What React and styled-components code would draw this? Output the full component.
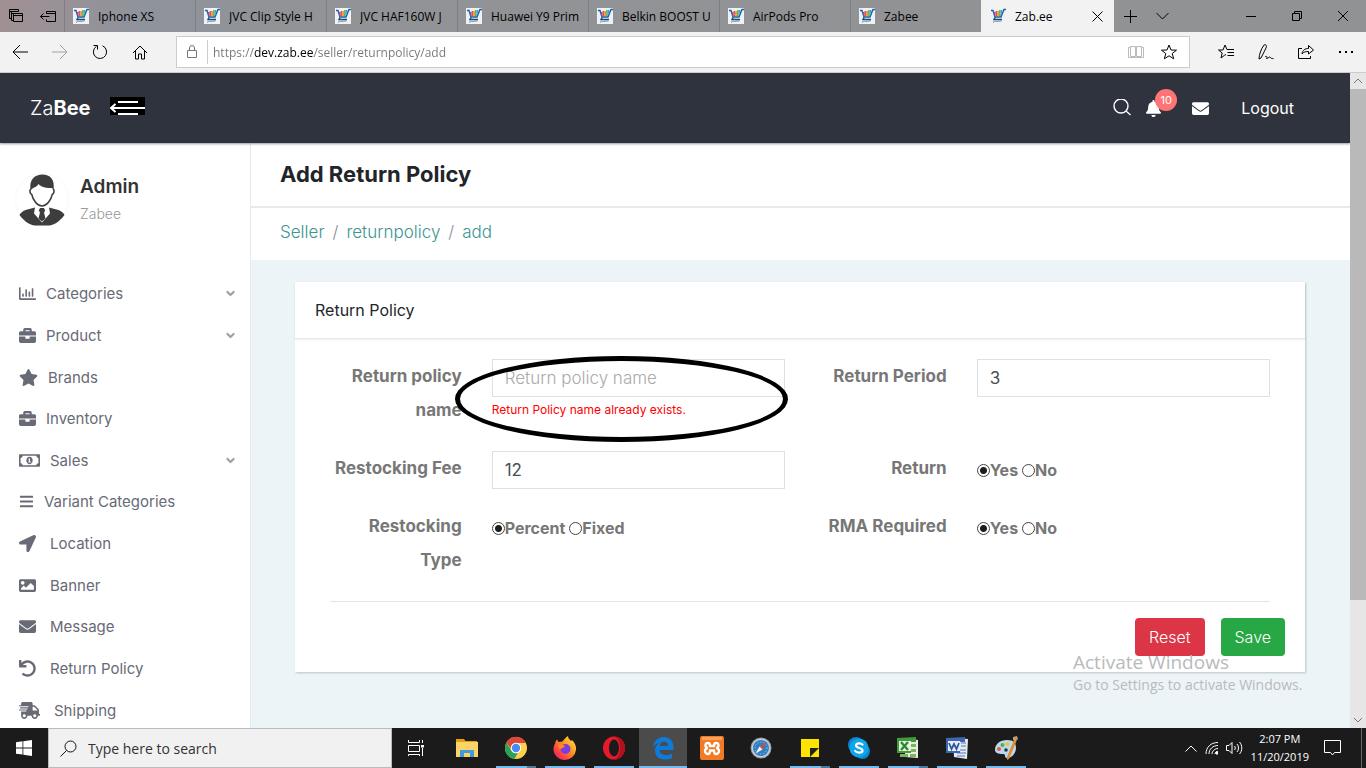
import React, { useState } from 'react'
import styled, { createGlobalStyle } from 'styled-components'
import {
  FaRegChartBar, FaBriefcase, FaStar, FaRegMoneyBillAlt, FaBars, FaLocationArrow,
  FaImage, FaEnvelope, FaUndo, FaShippingFast, FaBell, FaChevronDown
} from 'react-icons/fa'

const tabs = ['Iphone XS', 'JVC Clip Style H', 'JVC HAF160W J', 'Huawei Y9 Prim', 'Belkin BOOST U', 'AirPods Pro', 'Zabee']

const menu = [
  { label: 'Categories', icon: FaRegChartBar, more: true },
  { label: 'Product', icon: FaBriefcase, more: true },
  { label: 'Brands', icon: FaStar, size: 19 },
  { label: 'Inventory', icon: FaBriefcase },
  { label: 'Sales', icon: FaRegMoneyBillAlt, more: true, size: 21 },
  { label: 'Variant Categories', icon: FaBars, size: 15 },
  { label: 'Location', icon: FaLocationArrow, wide: true },
  { label: 'Banner', icon: FaImage, wide: true },
  { label: 'Message', icon: FaEnvelope, wide: true },
  { label: 'Return Policy', icon: FaUndo, wide: true },
  { label: 'Shipping', icon: FaShippingFast, wide: true, size: 21 },
]

const Line = ({ w = 16, h = 16, sw = 1, children }) => (
  <svg width={w} height={h} viewBox={`0 0 ${w} ${h}`} fill="none" stroke="currentColor" strokeWidth={sw}>
    {children}
  </svg>
)

const CartIcon = () => (
  <svg width="16" height="16" viewBox="0 0 16 16">
    <rect width="16" height="16" fill="#eef2f6" />
    <path d="M1 2.500h2l2 6.500h6L14 1.500h2" fill="none" stroke="#1d5f9e" strokeWidth="1.4" />
    <path d="M3.500 4h2v4h-1z" fill="#8c4fb0" />
    <path d="M5.500 3h2v5h-2z" fill="#e2574c" />
    <path d="M7.500 3h1.500v5H7.500z" fill="#f29b30" />
    <path d="M9 2h1.500v6H9z" fill="#6cb845" />
    <path d="M10.500 2h2L11 8h-.5z" fill="#2fa3dc" />
    <path d="M5 9.500l-1 2h8" fill="none" stroke="#23486e" strokeWidth="1.4" />
    <path d="M3 14.500c2-2 2-1 3.500-1s3-.8 5-.6" fill="none" stroke="#6d8ba8" />
  </svg>
)

const Avatar = () => (
  <svg width="54" height="54" viewBox="0 0 54 54">
    <circle cx="27" cy="27" r="26.500" fill="#fff" stroke="#f9f9f9" />
    <path d="M16 16c-2 1-1 5 .8 5.600C18 27 22 33 27 33s9-6 10.200-11.400C39 21 40 17 38 16" fill="#fff" stroke="#3d3d3d" strokeWidth="1.6" />
    <path d="M15.500 17C14 6 20 1.500 27.500 1.500S40 6 38.500 17l-1.500-2c-5 .5-11-1-13.500-4-1 2.500-4 3-6 4.500z" fill="#3d3d3d" />
    <path d="M20 34.500L10.500 37C7.500 38 5.500 40 4.500 42c5 7 12 10.500 15 10.500h15c3 0 10-3.500 15-10.500-1-2-3-4-6-5L34 34.500l1 6-8 9-8-9z" fill="#3d3d3d" />
    <path d="M25 35h4l1.200 2.500-1.200 2 1.500 6-3.500 3-3.500-3 1.500-6-1.200-2z" fill="#3d3d3d" />
  </svg>
)

const Icon24 = ({ children }) => <svg width="24" height="24" viewBox="0 0 24 24">{children}</svg>

const apps = [
  {
    name: 'File Explorer',
    art: <Icon24>
      <path d="M1 3h8l1.500 2H22v3H1z" fill="#e0a010" />
      <path d="M1 6h22v15H1z" fill="#fbd366" />
      <path d="M5 21v-7h14v7h-4v-4H9v4z" fill="#3f9bdc" />
    </Icon24>
  },
  {
    name: 'Chrome', open: true, many: true,
    art: <Icon24>
      <circle cx="12" cy="12" r="11" fill="#fdd24a" />
      <path d="M2.500 6.500A11 11 0 0 1 22 7H12a5 5 0 0 0-4.600 6.500z" fill="#d9483b" />
      <path d="M2.500 6.500l5 8.500A5 5 0 0 0 14 16.600L10.500 23A11 11 0 0 1 2.500 6.500z" fill="#2aa15a" />
      <circle cx="12" cy="12" r="5.200" fill="#fff" />
      <circle cx="12" cy="12" r="4.200" fill="#4a8af4" />
    </Icon24>
  },
  {
    name: 'Firefox', open: true,
    art: <Icon24>
      <defs>
        <linearGradient id="fox" x1="1" y1="0" x2="0" y2="1">
          <stop offset="0" stopColor="#fff04f" /><stop offset=".4" stopColor="#ff9a1f" />
          <stop offset=".75" stopColor="#ff3b47" /><stop offset="1" stopColor="#d6148f" />
        </linearGradient>
      </defs>
      <path d="M2 8c.3-2 1-3.500 2-4.500L5.500 6l4-.5C11.500 3 13 1 15 0c0 2 1.500 3.500 3 5l1-1c3 3 4.500 6 4 10A11.400 11.400 0 0 1 12 24C6 24 .5 19.500.5 13c0-2 .5-4 1.500-5z" fill="url(#fox)" />
      <circle cx="12.500" cy="13" r="5" fill="#7a3ee0" />
      <path d="M5 9c3-1 5-.5 7 1-1 2-3 1.500-4 3-1.500 0-3-1.500-3-4z" fill="#ff8a1c" />
    </Icon24>
  },
  {
    name: 'Opera', open: true,
    art: <Icon24>
      <ellipse cx="12" cy="12" rx="11" ry="11.500" fill="#e8192c" />
      <path d="M12 .5a11 11.500 0 0 1 0 23c4-1 6-6 6-11.500S16 1.500 12 .5z" fill="#b3101f" />
      <ellipse cx="12" cy="12" rx="5" ry="8.500" fill="#1b1b1b" />
    </Icon24>
  },
  {
    name: 'Edge', open: true, active: true,
    art: <Icon24>
      <path d="M2 11C3 4.500 7.500 1 12.800 1 19 1 22.500 5.500 22.500 11v3H8.500c.2 3.500 3 5 6.500 5 2.500 0 4.500-.7 6-1.600v4.500c-2 1-4.200 1.600-7 1.600-6.500 0-10-4-10-9 0-3.800 2-6.500 5-8-3.500.5-5.500 2.500-7 4.500zm6.600-1H17c0-3-1.600-4.600-4-4.600-2.500 0-4 2-4.400 4.600z" fill="#0c7cdc" />
    </Icon24>
  },
  {
    name: 'XAMPP',
    art: <Icon24>
      <rect width="24" height="24" rx="2" fill="#f07a25" />
      <path d="M2 1h20v3H2z" fill="#f9a25c" />
      <path d="M8 7a2.500 2.500 0 1 0 0 5 2.500 2.500 0 1 0 0 6c2 0 2-2 2-3.500h4c0 1.500 0 3.500 2 3.500a2.500 2.500 0 1 0 0-6 2.500 2.500 0 1 0 0-5c-2 0-2 1.500-2 3h-4c0-1.500 0-3-2-3z" fill="none" stroke="#fff" strokeWidth="2.400" />
    </Icon24>
  },
  {
    name: 'Safari',
    art: <Icon24>
      <circle cx="12" cy="12" r="10.500" fill="#8f979e" />
      <circle cx="12" cy="12" r="9.500" fill="#c9ced2" />
      <circle cx="12" cy="12" r="8" fill="#2f7fc4" />
      <circle cx="12" cy="12" r="6" fill="none" stroke="#9fd0f2" strokeDasharray="1 2" />
      <path d="M17.500 6.500L13.500 13.500 10.500 10.500z" fill="#e2443b" />
      <path d="M6.500 17.500L10.500 10.500 13.500 13.500z" fill="#f3f3f3" />
    </Icon24>
  },
  {
    name: 'Sticky Notes', open: true, many: true,
    art: <Icon24>
      <path d="M3 3h18v9h-9v9H3z" fill="#ffe400" />
      <path d="M12 12h9l-9 9z" fill="#222" />
      <path d="M21 12v9h-9z" fill="#ffe400" />
    </Icon24>
  },
  {
    name: 'Skype', open: true,
    art: <Icon24>
      <circle cx="9" cy="9" r="8" fill="#0a84d0" />
      <circle cx="15.500" cy="15.500" r="7.500" fill="#0a84d0" />
      <circle cx="12" cy="12" r="9.500" fill="#10a5ea" />
      <path d="M15.500 8.500C14.500 7 9 6.500 9 9.500s6.500 2 6.500 5-6 2.500-7.300.5" fill="none" stroke="#fff" strokeWidth="2.200" strokeLinecap="round" />
    </Icon24>
  },
  {
    name: 'Excel', open: true, many: true,
    art: <Icon24>
      <path d="M9 2l13 2v18l-13-1z" fill="#e6efe2" />
      <path d="M14 8h6v3h-6zM14 13h6v3h-6zM14 18h6v3h-6zM4 18h8v3H4z" fill="#7fb45f" />
      <path d="M1 2l19-1v5h-5v11H1z" fill="#3f9b3b" />
      <path d="M3 5h12v10H3z" fill="#e9f4e5" />
      <path d="M5 6l7 8M12 6l-7 8" stroke="#2c8a2c" strokeWidth="2.400" />
    </Icon24>
  },
  {
    name: 'Word', open: true,
    art: <Icon24>
      <path d="M8 2l15 1-1 20-13-2z" fill="#e5ebf6" />
      <path d="M16 7h5M16 10h5M14 14h7M12 17h9M12 20h8" stroke="#5779b8" />
      <path d="M1 2l19-1v5h-5v11H1z" fill="#3d66b0" />
      <path d="M3 5h12v10H3z" fill="#e8eefa" />
      <path d="M4 7l2.500 6L9 8l2.500 5L14 7" fill="none" stroke="#2d55a4" strokeWidth="1.800" />
    </Icon24>
  },
  {
    name: 'Paint', open: true,
    art: <Icon24>
      <path d="M1 14C1 8 6 4 13 4s9 3 9 8-4 10-9 10c-3 0-1-4-3.500-4S1 18 1 14z" fill="#b9d9ee" />
      <circle cx="5" cy="13" r="2" fill="#e0584a" />
      <circle cx="8.500" cy="9" r="2" fill="#58ad48" />
      <circle cx="13.500" cy="8" r="2" fill="#f1c232" />
      <circle cx="12" cy="14" r="1.800" fill="#273444" />
      <path d="M20 4l2.500 1L15 23l-2 1v-3z" fill="#e58a2c" />
      <path d="M19 1l4-1 1 3-2.500 2.500L19 4z" fill="#c49a72" />
    </Icon24>
  },
]

function BrowserBar() {
  return (
    <header>
      <TabStrip>
        <TabTools>
          <ToolButton aria-label="Tabs you've set aside"><Line><path d="M3.500 10.500h-2v-9h9v2M1.500 3.500h9M5.500 12.500h-2v-9M3.500 5.500h9" /><path d="M5.500 5.500h9v8h-9zM5.500 7.500h9" /></Line></ToolButton>
          <ToolButton aria-label="Set these tabs aside"><Line><path d="M6.500 5.500v-2h9v10h-9v-2M6.500 5.500h9M.5 8.500h9M3.500 5.500l-3 3 3 3" /></Line></ToolButton>
        </TabTools>
        {tabs.map((name) => (
          <Tab key={name}><CartIcon /><span>{name}</span></Tab>
        ))}
        <Tab $active><CartIcon /><span>Zab.ee</span>
          <Line w={11} h={11}><path d="M.5.5l10 10M10.500.5l-10 10" /></Line>
        </Tab>
        <StripButton aria-label="New tab"><Line w={13} h={13}><path d="M6.500 0v13M0 6.500h13" /></Line></StripButton>
        <StripButton aria-label="Tab previews"><Line w={13} h={8}><path d="M.5 1l6 6 6-6" /></Line></StripButton>
        <WindowButtons>
          <WindowButton aria-label="Minimise"><Line w={10} h={10}><path d="M0 5.500h10" /></Line></WindowButton>
          <WindowButton aria-label="Restore"><Line w={10} h={10}><path d="M.5 2.500h7v7h-7zM2.500 2.500v-2h7v7h-2" /></Line></WindowButton>
          <WindowButton aria-label="Close"><Line w={10} h={10}><path d="M0 0l10 10M10 0L0 10" /></Line></WindowButton>
        </WindowButtons>
      </TabStrip>
      <Toolbar>
        <NavButton aria-label="Back"><Line><path d="M1 8h15M8 1L1 8l7 7" /></Line></NavButton>
        <NavButton aria-label="Forward" disabled><Line><path d="M0 8h15M8 1l7 7-7 7" /></Line></NavButton>
        <NavButton aria-label="Refresh"><Line><path d="M10.500 1.800A6.600 6.600 0 1 1 4.500 2.300M1.500 1.500h4v4" /></Line></NavButton>
        <NavButton aria-label="Home"><Line><path d="M1 9l7-7 7 7M3.500 7v8h3v-5h3v5h3V7" /></Line></NavButton>
        <Address>
          <LockCell><Line w={12} h={14}><path d="M1.500 5.500h9v7h-9zM3.500 5.500V3a2.500 2.500 0 0 1 5 0v2.500" /></Line></LockCell>
          <UrlInput aria-label="Address" defaultValue="https://dev.zab.ee/seller/returnpolicy/add" />
          <AddressButton aria-label="Reading view" disabled><Line><path d="M7.500 2.500h-5v10h5zM8.500 2.500h5v10h-5zM2.500 3.500h-2v10h15v-10h-2" /></Line></AddressButton>
          <AddressButton aria-label="Add to favourites"><Line><path d="M8 1l2 5 5.500.2-4.300 3.400 1.500 5.200L8 11.800l-4.700 3 1.500-5.200L.5 6.200 6 6z" /></Line></AddressButton>
        </Address>
        <NavButton aria-label="Favourites"><Line><path d="M8 10.500l-1.500.8L3 14l1.200-5L.5 6H5l2-5 2 4.500h7M9.500 8.500H16M9.500 11.500H16" /></Line></NavButton>
        <NavButton aria-label="Notes"><Line><path d="M1 15c0-4 2-10 5-14 2-1 3 .5 2 3L3 14l-2 1zM7 13c2-2 2.500 1 1.500 1.500 2 0 3-2.500 4-1s2 1 3 1" /></Line></NavButton>
        <NavButton aria-label="Share"><Line><path d="M4 4.500H.5v10h12V12M4 10c.5-4 3-5.500 6.500-5.500V1.500l5 4.500-5 4V7.500C7.500 7.500 5.500 8 4 10z" /></Line></NavButton>
        <NavButton aria-label="More"><Line sw={2}><path d="M1 8h2M7 8h2M13 8h2" /></Line></NavButton>
      </Toolbar>
    </header>
  )
}

function Sidebar() {
  return (
    <SideNav>
      <Profile>
        <Avatar />
        <div>
          <h2>Admin</h2>
          <p>Zabee</p>
        </div>
      </Profile>
      <MenuList>
        {menu.map(({ label, icon: Icon, more, wide, size = 17 }) => (
          <li key={label}>
            <MenuLink href="#" $wide={wide}>
              <Icon size={size} />
              <span>{label}</span>
              {more && <FaChevronDown className="more" size={9} />}
            </MenuLink>
          </li>
        ))}
      </MenuList>
    </SideNav>
  )
}

function Choice({ name, legend, options }) {
  const [value, setValue] = useState(options[0])

  return (
    <Field role="radiogroup" aria-labelledby={name}>
      <FieldLabel as="span" id={name}>{legend}</FieldLabel>
      <Options>
        {options.map((option) => (
          <label key={option}>
            <Radio name={name} checked={value === option} onChange={() => setValue(option)} />
            {option}
          </label>
        ))}
      </Options>
    </Field>
  )
}

function PolicyForm() {
  return (
    <Card>
      <CardHeader>Return Policy</CardHeader>
      <Form onSubmit={(e) => e.preventDefault()}>
        <Fields>
          <Field>
            <FieldLabel htmlFor="policy">Return policy name</FieldLabel>
            <Control>
              <TextInput id="policy" placeholder="Return policy name" />
              <ErrorText>Return Policy name already exists.</ErrorText>
              <Highlight />
            </Control>
          </Field>
          <Field>
            <FieldLabel htmlFor="period">Return Period</FieldLabel>
            <Control><TextInput id="period" defaultValue="3" /></Control>
          </Field>
          <Field>
            <FieldLabel htmlFor="fee">Restocking Fee</FieldLabel>
            <Control><TextInput id="fee" defaultValue="12" /></Control>
          </Field>
          <Choice name="return" legend="Return" options={['Yes', 'No']} />
          <Choice name="type" legend="Restocking Type" options={['Percent', 'Fixed']} />
          <Choice name="rma" legend="RMA Required" options={['Yes', 'No']} />
        </Fields>
        <Divider />
        <Actions>
          <ActionButton type="reset" $color="#dc3545">Reset</ActionButton>
          <ActionButton type="submit" $color="#28a745">Save</ActionButton>
        </Actions>
      </Form>
    </Card>
  )
}

function Taskbar() {
  return (
    <TaskRow>
      <TaskButton aria-label="Start">
        <svg width="16" height="16" viewBox="0 0 16 16" fill="#fff"><path d="M0 2.200L6.500 1.300v6.200H0zM7.300 1.200L16 0v7.500H7.300zM0 8.400h6.500v6.200L0 13.700zM7.300 8.400H16V16l-8.700-1.200z" /></svg>
      </TaskButton>
      <SearchBox>
        <Line w={17} h={17}><circle cx="10.500" cy="6.500" r="5.500" /><path d="M6.500 10.500L.5 16.500" /></Line>
        <input aria-label="Search" placeholder="Type here to search" />
      </SearchBox>
      <TaskButton aria-label="Task view">
        <Line w={17} h={16}><path d="M.5 0v2.500h11V0M.5 5.500h11v6H.5zM.5 16v-1.500h11V16M14.500 0v3M14.500 8v8" /><path d="M13 5h3v2.500h-3z" fill="#fff" stroke="none" /></Line>
      </TaskButton>
      <AppList>
        {apps.map((app) => (
          <AppButton key={app.name} aria-label={app.name} $open={app.open} $many={app.many} $active={app.active}>{app.art}</AppButton>
        ))}
      </AppList>
      <Tray>
        <Line w={12} h={7}><path d="M.5 6.500L6 1l5.500 5.500" /></Line>
        <Line w={13} h={14}><path d="M1 13C1 6 6 1.500 13 1.500M4 13c0-5 4-8.500 9-8.500M7 13c0-3 3-5.500 6-5.500M10 13c0-1.500 1.500-2.500 3-2.500" /><path d="M11 11h2v2h-2z" fill="#fff" /></Line>
        <Line w={17} h={14}><path d="M.5 4.500H3l3-3v11l-3-3H.5zM8.500 5c1 1 1 3 0 4M11 3c2 2 2 6 0 8M13.500 1c3 3 3 9 0 12" /></Line>
        <Clock><span>2:07 PM</span><span>11/20/2019</span></Clock>
        <Line w={17} h={16}><path d="M.5.5h16v12h-6l-2 2.500-2-2.500h-6z" /></Line>
        <ShowDesktop aria-label="Show desktop" />
      </Tray>
    </TaskRow>
  )
}

function App() {
  return (
    <Screen>
      <GlobalStyle />
      <BrowserBar />
      <Viewport>
        <Site>
          <SiteHeader>
            <Brand href="#">Za<b>Bee</b></Brand>
            <MenuToggle aria-label="Toggle menu">
              <svg width="35" height="18" viewBox="0 0 35 18" fill="none" stroke="#fff" strokeWidth="2">
                <rect width="35" height="18" fill="#000" stroke="none" />
                <path d="M8 5h20M1 11h34M8 17h20M5.500 7L1 11l4.500 4" />
              </svg>
            </MenuToggle>
            <HeaderTools>
              <IconButton aria-label="Search"><Line w={18} h={18} sw={1.4}><circle cx="8" cy="7" r="7" /><path d="M13 12l4.500 4" /></Line></IconButton>
              <IconButton aria-label="Notifications"><FaBell /><Badge>10</Badge></IconButton>
              <IconButton aria-label="Messages" $spaced><FaEnvelope /></IconButton>
              <a href="#">Logout</a>
            </HeaderTools>
          </SiteHeader>
          <SiteBody>
            <Sidebar />
            <Main>
              <PageTitle>Add Return Policy</PageTitle>
              <Breadcrumb>
                <a href="#">Seller</a><span>/</span><a href="#">returnpolicy</a><span>/</span><a href="#">add</a>
              </Breadcrumb>
              <PolicyForm />
            </Main>
          </SiteBody>
        </Site>
        <ScrollBar>
          <Line w={16} h={16}><path d="M4 10l4-4 4 4" /></Line>
          <ScrollTrack><div /></ScrollTrack>
          <Line w={16} h={16}><path d="M4 6l4 4 4-4" /></Line>
        </ScrollBar>
      </Viewport>
      <Watermark>
        <h4>Activate Windows</h4>
        <p>Go to Settings to activate Windows.</p>
      </Watermark>
      <Taskbar />
    </Screen>
  )
}

const GlobalStyle = createGlobalStyle`
  * { box-sizing: border-box; margin: 0; padding: 0; }
  button, input { font: inherit; color: inherit; border: 0; background: none; outline: 0; min-width: 0; }
  button { display: flex; align-items: center; justify-content: center; }
  a { color: inherit; text-decoration: none; }
  ul { list-style: none; }
  svg { flex: none; }
`

const Screen = styled.div`
  display: flex;
  flex-direction: column;
  height: 100vh;
  overflow: hidden;
  font-family: "Open Sans", "Noto Sans", sans-serif;
  font-size: 12px;
  color: #000;
`

const TabStrip = styled.div`
  display: flex;
  height: 32px;
  background: linear-gradient(90deg, #a09093 0, #8f939c 140px, #919396 300px, #909294 100%);
`

const TabTools = styled.div`
  display: flex;
  width: 64px;
`

const ToolButton = styled.button`
  width: 32px;
`

const Tab = styled.div`
  display: flex;
  align-items: center;
  gap: 9px;
  flex: 0 1 ${(p) => (p.$active ? 133 : 131)}px;
  min-width: 0;
  padding: 0 ${(p) => (p.$active ? 11 : 8)}px 0 8px;
  border-left: 1px solid ${(p) => (p.$active ? '#f2f2f2' : '#7d7f82')};
  background: ${(p) => (p.$active ? '#f2f2f2' : 'none')};
  white-space: nowrap;
  span {
    flex: 1;
    overflow: hidden;
  }
`

const StripButton = styled.button`
  width: 32px;
`

const WindowButtons = styled.div`
  display: flex;
  margin-left: auto;
`

const WindowButton = styled.button`
  width: 46px;
`

const Toolbar = styled.div`
  display: flex;
  height: 41px;
  align-items: center;
  background: #f2f2f2;
  border-bottom: 1px solid #ccc;
`

const NavButton = styled.button`
  width: 40px;
  height: 40px;
  &:disabled {
    color: #a0a0a0;
  }
`

const Address = styled.div`
  display: flex;
  align-items: center;
  flex: 1;
  height: 32px;
  margin: 0 16px;
  padding-right: 4px;
  background: #fff;
  border: 1px solid #ccc;
`

const LockCell = styled.span`
  display: flex;
  align-items: center;
  justify-content: center;
  width: 31px;
  height: 24px;
  color: #767676;
  border-right: 1px solid #ccc;
`

/* host part of the url is darker than the rest */
const UrlInput = styled.input`
  flex: 1;
  height: 30px;
  margin-left: 5px;
  font-size: 12px;
  color: #767676;
  background: linear-gradient(90deg, #767676 41px, #000 41px, #000 101px, #767676 101px);
  background-clip: text;
  -webkit-background-clip: text;
  -webkit-text-fill-color: transparent;
`

const AddressButton = styled.button`
  width: 33px;
  height: 30px;
  &:disabled {
    color: #bbb;
  }
`

const Viewport = styled.div`
  display: flex;
  flex: 1;
  min-height: 0;
`

const Site = styled.div`
  display: flex;
  flex-direction: column;
  flex: 1;
  min-width: 0;
  overflow: hidden;
  font-family: Inter, sans-serif;
  font-size: 16px;
  color: #212529;
`

const SiteHeader = styled.div`
  position: relative;
  display: flex;
  align-items: center;
  flex: none;
  height: 70px;
  padding: 0 56px 0 30px;
  background: #2f333e;
  box-shadow: 0 1px 2px rgba(0, 0, 0, 0.4);
  color: #fff;
`

const Brand = styled.a`
  font-size: 20px;
  font-weight: 300;
  b {
    font-weight: 700;
  }
`

const MenuToggle = styled.button`
  margin: 0 auto 4px 20px;
`

const HeaderTools = styled.div`
  display: flex;
  align-items: center;
  gap: 14px;
`

const IconButton = styled.button`
  position: relative;
  margin-right: ${(p) => (p.$spaced ? 18 : 0)}px;
  margin-left: ${(p) => (p.$spaced ? 16 : 0)}px;
  font-size: 17px;
`

const Badge = styled.span`
  position: absolute;
  left: 10px;
  bottom: 6px;
  width: 22px;
  border-radius: 50%;
  background: #ff7474;
  font-size: 11px;
  line-height: 22px;
  text-align: center;
`

const SiteBody = styled.div`
  display: flex;
  flex: 1;
  min-height: 0;
`

const SideNav = styled.nav`
  flex: none;
  width: 251px;
  border-right: 1px solid #e8ebee;
  background: #fff;
`

const Profile = styled.div`
  display: flex;
  gap: 11px;
  padding: 30px 15px 46px;
  h2 {
    font-size: 19px;
    font-weight: 600;
    line-height: 28px;
    color: #333;
  }
  p {
    font-size: 14px;
    font-weight: 300;
    line-height: 26px;
    color: #999;
  }
`

const MenuList = styled.ul`
  display: grid;
  grid-auto-rows: 1fr;
  height: 458px;
`

const MenuLink = styled.a`
  display: flex;
  align-items: center;
  gap: ${(p) => (p.$wide ? 14 : 10)}px;
  height: 100%;
  padding: 0 15px 0 19px;
  font-size: 15px;
  color: #686a76;
  .more {
    margin-left: auto;
    color: #999;
    stroke: #999;
    stroke-width: 50px;
  }
`

const Main = styled.main`
  flex: 1;
  min-width: 0;
  background: #ecf4f8;
`

const PageTitle = styled.h1`
  padding: 0 29px;
  background: #fff;
  border-bottom: 2px solid #e9e9e9;
  font-size: 22px;
  font-weight: 700;
  line-height: 63px;
`

const Breadcrumb = styled.nav`
  display: flex;
  gap: 8px;
  padding: 0 29px 4px;
  background: #fff;
  font-size: 17px;
  font-weight: 300;
  line-height: 48px;
  color: #868e96;
  a {
    color: #3d9491;
  }
`

const Card = styled.section`
  margin: 22px 45px 0 44px;
  background: #fff;
  box-shadow: 1px 1px 2px rgba(0, 0, 0, 0.2);
`

const CardHeader = styled.h3`
  padding: 0 20px;
  border-bottom: 1px solid #eaeaea;
  box-shadow: 0 1px 2px rgba(0, 0, 0, 0.07);
  font-size: 16px;
  font-weight: 400;
  line-height: 56px;
`

const Form = styled.form`
  padding: 20px 20px 16px;
`

const Fields = styled.div`
  display: grid;
  grid-template-columns: 1fr 1fr;
  row-gap: 20px;
`

const Field = styled.div`
  display: grid;
  grid-template-columns: 1fr 2fr;
  align-items: start;
`

const FieldLabel = styled.label`
  padding: 0 15px;
  font-size: 17px;
  font-weight: 700;
  line-height: 34px;
  text-align: right;
  color: #777;
`

const Control = styled.div`
  position: relative;
  display: flex;
  flex-direction: column;
  margin: 0 15px;
`

const TextInput = styled.input`
  height: 38px;
  padding: 0 12px;
  border: 1px solid #dde0e4;
  font-size: 17px;
  color: #495057;
  &::placeholder {
    font-weight: 300;
    color: #aaa;
  }
`

const ErrorText = styled.p`
  height: 34px;
  font-size: 12px;
  line-height: 26px;
  color: #f00;
`

const Highlight = styled.span`
  position: absolute;
  inset: -3px -3px -11px -37px;
  border: 5px solid #000;
  border-radius: 50%;
  pointer-events: none;
`

const Options = styled.div`
  display: flex;
  gap: 4px;
  padding: 0 15px;
  font-weight: 700;
  line-height: 38px;
  color: #777;
  label {
    display: flex;
    align-items: center;
  }
`

const Radio = styled.input.attrs({ type: 'radio' })`
  appearance: none;
  width: 13px;
  height: 13px;
  border: 1px solid #444;
  border-radius: 50%;
  &:checked {
    background: radial-gradient(circle, #1d1d1d 3px, #fff 4px);
  }
`

const Divider = styled.hr`
  margin: 24px 15px 16px;
  border: 0;
  border-top: 1px solid #e2e3e4;
`

const Actions = styled.div`
  display: flex;
  justify-content: flex-end;
  gap: 16px;
`

const ActionButton = styled.button`
  height: 38px;
  padding: 0 14px;
  border-radius: 4px;
  background: ${(p) => p.$color};
  font-weight: 300;
  color: #fff;
`

const ScrollBar = styled.div`
  display: flex;
  flex-direction: column;
  width: 16px;
  background: #e6e6e6;
  color: #777;
`

const ScrollTrack = styled.div`
  flex: 1;
  div {
    height: 82%;
    background: #b9b9b9;
  }
`

const Watermark = styled.div`
  position: absolute;
  right: 57px;
  bottom: 72px;
  width: 236px;
  color: #b8babc;
  pointer-events: none;
  h4 {
    font-size: 19px;
    font-weight: 400;
    line-height: 24px;
  }
  p {
    font-size: 14px;
    line-height: 22px;
  }
`

const TaskRow = styled.footer`
  display: flex;
  flex: none;
  height: 40px;
  background: #1b1b1b;
  color: #fff;
`

const TaskButton = styled.button`
  width: 48px;
`

const SearchBox = styled.label`
  display: flex;
  align-items: center;
  gap: 11px;
  flex: 0 1 344px;
  padding: 0 11px;
  background: #f1f1f1;
  border: 1px solid #bbb;
  color: #111;
  font-size: 14px;
  input {
    flex: 1;
  }
  input::placeholder {
    color: #333;
  }
`

const AppList = styled.div`
  display: flex;
  gap: 1px;
  margin-left: 3px;
`

const AppButton = styled.button`
  position: relative;
  width: 48px;
  background: ${(p) => (p.$active ? '#4b4b4b' : 'none')};
  &::after {
    content: '';
    display: ${(p) => (p.$open ? 'block' : 'none')};
    position: absolute;
    bottom: 0;
    left: ${(p) => (p.$active ? 0 : 4)}px;
    right: ${(p) => (p.$active ? 0 : 4)}px;
    height: 2px;
    background: linear-gradient(90deg, #76b9ed 31px, ${(p) => (p.$many ? '#4d7a9c' : '#76b9ed')} 31px);
  }
`

const Tray = styled.div`
  display: flex;
  align-items: center;
  gap: 8px;
  margin-left: auto;
`

const Clock = styled.div`
  display: flex;
  flex-direction: column;
  margin-right: 7px;
  font-size: 11px;
  line-height: 18px;
  text-align: center;
`

const ShowDesktop = styled.button`
  width: 5px;
  height: 100%;
  margin-left: 12px;
  border-left: 1px solid #666;
`

export default App
